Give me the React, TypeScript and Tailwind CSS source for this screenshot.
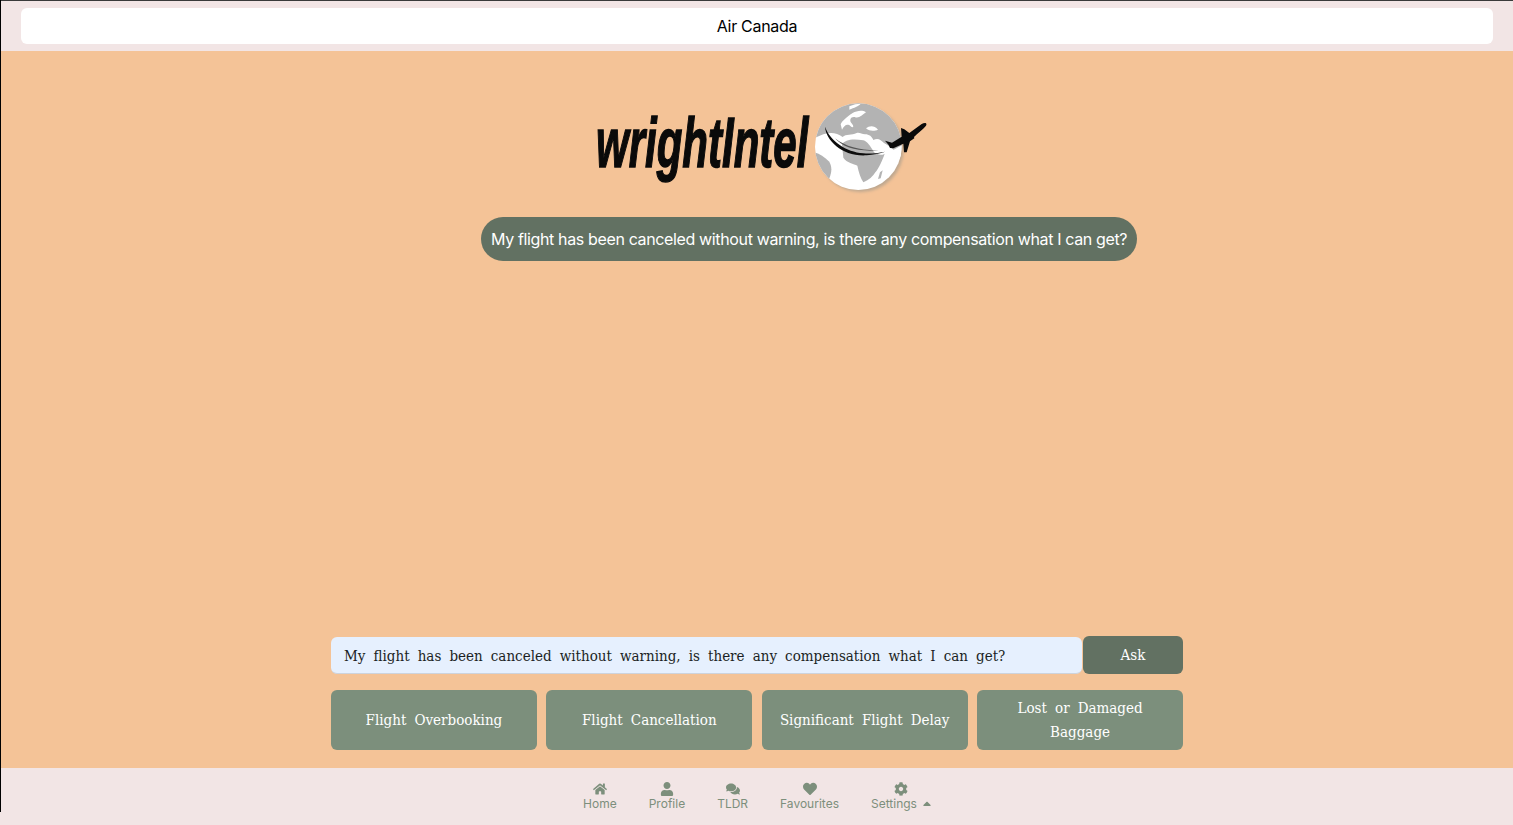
import React from "react";
import { FaHome, FaUser, FaComments, FaHeart, FaCog, FaCaretUp } from "react-icons/fa";

const topics = ["Flight Overbooking", "Flight Cancellation", "Significant Flight Delay", "Lost or Damaged Baggage"];

const navItems = [
  { label: "Home", icon: FaHome },
  { label: "Profile", icon: FaUser },
  { label: "TLDR", icon: FaComments },
  { label: "Favourites", icon: FaHeart },
];

const question = "My flight has been canceled without warning, is there any compensation what I can get?";
const slab = "font-['DejaVu_Serif_Condensed','DejaVu_Serif',serif] [word-spacing:3.8px]";

// Globe with the plane flying round it, drawn in the logo's own coordinates
const Globe = () => (
  <svg viewBox="0 0 375 315" className="w-[125px] h-[105px] shrink-0">
    <defs>
      <clipPath id="globe-clip">
        <circle cx="145" cy="155" r="130" />
      </clipPath>
      <filter id="globe-shadow">
        <feGaussianBlur stdDeviation="4" />
      </filter>
    </defs>
    <circle cx="152" cy="162" r="129" fill="#a89c8c" opacity="0.7" filter="url(#globe-shadow)" />
    <circle cx="145" cy="155" r="130" fill="#ffffff" />
    <g clipPath="url(#globe-clip)" fill="#b3b3b3">
      {/* north america and the top of the globe */}
      <path d="M10 20 L290 20 L290 150 L262 172 C250 165 235 150 222 144 C212 135 205 128 190 135 C186 125 178 118 165 118 C155 118 150 112 140 114 C125 122 108 116 98 126 C80 112 60 112 40 118 L10 130 Z" />
      {/* white lace over the gray */}
      <path d="M96 104 C102 92 112 84 122 94 C128 100 134 96 126 86 C116 76 122 64 134 66 C146 72 156 60 168 52 C156 44 140 48 128 54 C112 64 96 78 92 88 Z" fill="#ffffff" />
      <path d="M118 34 C130 28 142 26 152 26 C146 34 132 38 118 44 Z" fill="#ffffff" />
      <path d="M168 100 C178 92 192 90 204 104 C194 108 180 110 168 100 Z" fill="#ffffff" />
      {/* africa */}
      <path d="M96 148 C105 135 125 130 160 136 C172 140 180 152 192 172 C202 180 215 182 224 176 C218 195 205 222 196 232 C188 244 178 255 160 262 C152 250 146 232 142 212 C132 206 110 204 100 188 Z" />
      {/* south america */}
      <path d="M5 170 C20 172 40 182 58 200 C64 212 68 225 58 250 L52 262 L20 300 L0 240 Z" />
      {/* madagascar */}
      <path d="M210 232 L218 226 L212 250 L204 252 Z" />
      {/* red sea */}
      <path d="M188 140 L208 176 L200 170 Z" fill="#ffffff" />
      <path d="M240 170 L278 150 L275 185 L250 215 Z" fill="#ffffff" />
    </g>
    {/* swoosh */}
    <path d="M45 95 C48 138 100 186 170 181 C190 179 210 176 226 170 C200 175 180 177 160 175 C108 170 62 140 45 95 Z" fill="#0c0c0c" />
    <path d="M75 130 C100 160 150 172 215 165 C160 168 110 158 75 130 Z" fill="#555555" />
    {/* plane */}
    <path d="M225 137 L246 143 L275 125 L273 99 L283 103 L298 114 L335 87 C343 83 351 83 349 90 C346 97 335 105 312 126 L313 130 L300 139 L290 172 L282 172 L280 146 L250 160 L240 159 L236 150 Z" fill="#0a0a0a" />
  </svg>
);

export default function App() {
  return (
    <div className="relative h-[825px] w-full flex flex-col font-['Inter',sans-serif] bg-[#f2e5e5] overflow-hidden">
      {/* window edge lines */}
      <div className="absolute left-0 top-0 h-px w-full bg-[#3a3a3a]" />
      <div className="absolute left-0 top-0 h-[812px] w-px bg-black" />

      <header className="h-[51px] shrink-0 pt-2 pl-[21px] pr-5">
        <div className="h-9 bg-white rounded-md flex items-center justify-center text-base tracking-[-0.3px] text-black">Air Canada</div>
      </header>

      <main className="flex-1 ml-px bg-[#f4c397] flex flex-col items-center">
        <div className="flex items-center h-[105px] mt-11 w-[340px] pl-[9px]">
          <div className="w-[214px] h-[105px] shrink-0 font-['Liberation_Sans',sans-serif] font-bold italic text-[70px] leading-[97px] text-[#0a0a0a] whitespace-nowrap origin-left scale-x-[0.6] [-webkit-text-stroke:1.5px_#0a0a0a]">
            wrightIntel
          </div>
          <Globe />
        </div>

        <div className="mt-[17px] ml-[104px] h-11 w-[656px] px-[10px] rounded-[22px] bg-[#627162] text-white text-base tracking-[-0.36px] flex items-center whitespace-nowrap">
          {question}
        </div>

        <div className="flex-1" />

        <div className="w-[852px] mb-[18px]">
          <div className="flex h-[38px]">
            <input
              readOnly
              value={question}
              className={`w-[751px] h-[37px] mt-px px-[13px] pt-px rounded-md bg-[#e6f0fe] border-b border-[#cdd3dc] text-[15px] text-[#1b1f24] outline-none ${slab}`}
            />
            <button className={`ml-px flex-1 rounded-md bg-[#627162] text-white text-[15px] ${slab}`}>Ask</button>
          </div>
          <div className="mt-4 grid grid-cols-4 gap-[9.5px]">
            {topics.map((t) => (
              <button
                key={t}
                className={`h-[60px] px-[14px] rounded-md bg-[#7c8f7c] text-white text-[15px] leading-6 ${slab}`}
              >
                {t}
              </button>
            ))}
          </div>
        </div>
      </main>

      <footer className="h-[57px] shrink-0 flex justify-center gap-8 pt-[14px] pl-px text-xs text-[#7d8f7c]">
        {navItems.map(({ label, icon: Icon }) => (
          <div key={label} className="flex flex-col items-center">
            <Icon className="w-[14px] h-[14px]" />
            <span className="leading-[15px]">{label}</span>
          </div>
        ))}
        <div className="flex flex-col items-center">
          <FaCog className="w-[14px] h-[14px]" />
          <div className="flex items-center">
            <span className="leading-[15px]">Settings</span>
            <FaCaretUp className="w-2 h-[13px] ml-[6px]" />
          </div>
        </div>
      </footer>
    </div>
  );
}
